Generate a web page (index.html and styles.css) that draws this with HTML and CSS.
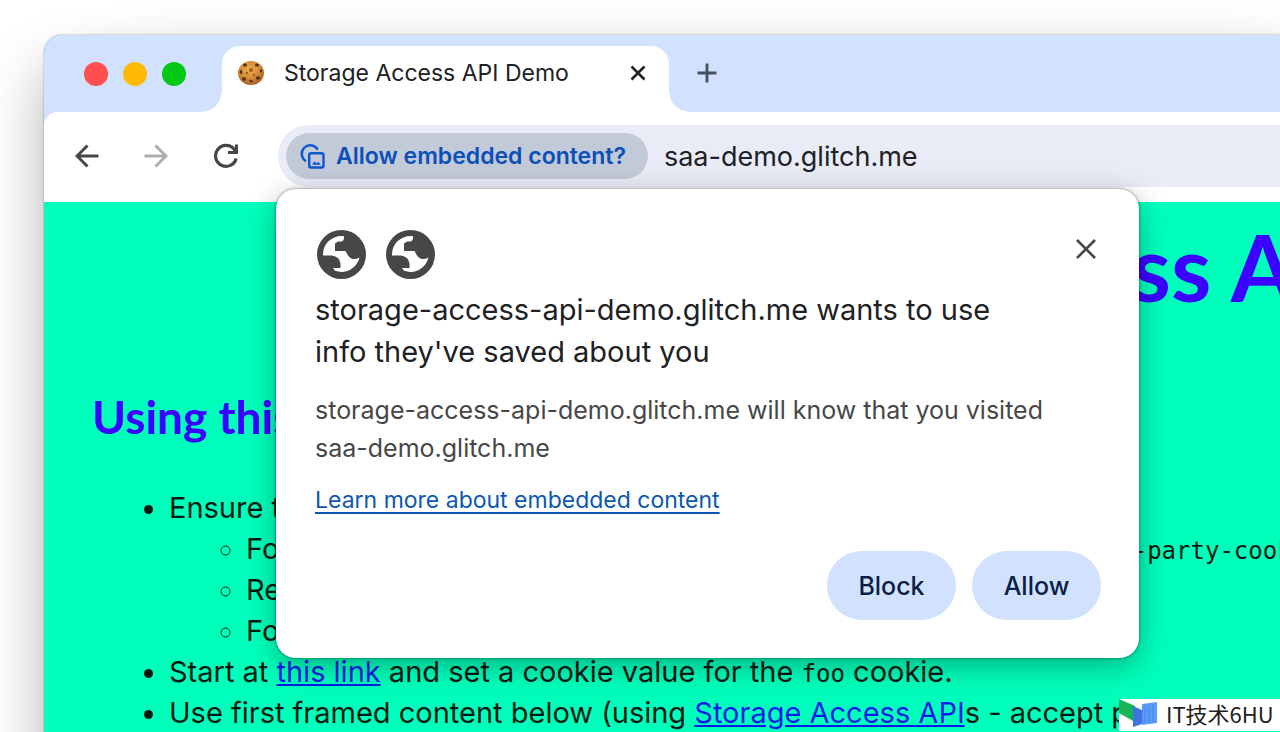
FILE: index.html
```html
<!DOCTYPE html>
<html lang="en">
<head>
  <meta charset="UTF-8" />
  <meta name="viewport" content="width=device-width, initial-scale=1.0"/>
  <title>Storage Access API Demo</title>
  <link rel="stylesheet" href="styles.css">
</head>
<body>
  <div class="window">
    <header class="tab-strip">
      <div class="lights">
        <span class="light red"></span>
        <span class="light yellow"></span>
        <span class="light green"></span>
      </div>
      <div class="tab">
        <svg class="favicon" viewBox="0 0 26 24">
          <defs>
            <radialGradient id="dough" cx="45%" cy="35%" r="65%">
              <stop offset="0" stop-color="#e9b04f"/>
              <stop offset="0.6" stop-color="#d08a35"/>
              <stop offset="1" stop-color="#a85f22"/>
            </radialGradient>
          </defs>
          <ellipse cx="13" cy="12" rx="13" ry="12" fill="url(#dough)"/>
          <g fill="#5c2c12">
            <ellipse cx="7" cy="4" rx="2" ry="1.5"/>
            <ellipse cx="19" cy="4" rx="2" ry="1.6"/>
            <ellipse cx="3" cy="11" rx="1.3" ry="2"/>
            <ellipse cx="6" cy="18" rx="2" ry="1.7"/>
            <ellipse cx="20" cy="17" rx="2.2" ry="1.8"/>
            <ellipse cx="13" cy="20" rx="1.6" ry="1.3"/>
            <ellipse cx="23" cy="10" rx="1.2" ry="1.8"/>
          </g>
          <g fill="#a5591e">
            <circle cx="13" cy="9" r="2"/>
            <circle cx="9" cy="12" r="1.2"/>
            <circle cx="16" cy="14" r="1.3"/>
          </g>
        </svg>
        <span class="tab-title">Storage Access API Demo</span>
        <button class="icon-button tab-close" aria-label="Close tab">
          <svg width="16" height="16" viewBox="0 0 16 16"><path d="M1.5 1.5l13 13M14.5 1.5l-13 13" stroke="#202124" stroke-width="2.6"/></svg>
        </button>
      </div>
      <button class="icon-button new-tab" aria-label="New tab">
        <svg width="20" height="20" viewBox="0 0 20 20"><path d="M10 0.5v19M0.5 10h19" stroke="#474f5e" stroke-width="2.8"/></svg>
      </button>
    </header>

    <div class="toolbar">
      <button class="icon-button" aria-label="Back">
        <svg width="24" height="24" viewBox="0 0 24 24"><path d="M23.5 12H2M12.5 1.5L2 12l10.5 10.5" fill="none" stroke="#474747" stroke-width="3"/></svg>
      </button>
      <button class="icon-button" aria-label="Forward">
        <svg width="24" height="24" viewBox="0 0 24 24"><path d="M0.5 12H22M11.5 1.5L22 12 11.5 22.5" fill="none" stroke="#adadad" stroke-width="3"/></svg>
      </button>
      <button class="icon-button" aria-label="Reload">
        <svg width="26" height="26" viewBox="0 0 26 26"><path d="M23.2 15.5A10.5 10.5 0 1 1 21 6l2 3" fill="none" stroke="#474747" stroke-width="3.2"/><path d="M23.5 1.5V9.5H15" fill="none" stroke="#474747" stroke-width="3"/></svg>
      </button>
      <div class="omnibox">
        <button class="chip">
          <svg width="26" height="26" viewBox="0 0 26 26" fill="none" stroke="#0b57d0" stroke-width="2.4">
            <path d="M7 18.3A8.600 8.600 0 1 1 18.800 6.600"/>
            <rect x="10.2" y="10.2" width="14.3" height="14.3" rx="2"/>
            <path d="M13 21.8l2.600-3.600 2 2.400 1.600-1.800 2.600 3z" fill="#0b57d0" stroke="none"/>
          </svg>
          Allow embedded content?
        </button>
        <span class="url">saa-demo.glitch.me</span>
      </div>
    </div>

    <main class="page">
      <h1>Storage Access API Demo</h1>
      <h2>Using this demo</h2>
      <ul>
        <li>Ensure third-party cookies are blocked:
          <ul>
            <li>For Chrome, turn on the following browser flag: <code>#block-all-third-party-cookies</code></li>
            <li>Restart the browser</li>
            <li>For other browsers, use the defaults</li>
          </ul>
        </li>
        <li>Start at <a href="#">this link</a> and set a cookie value for the <code>foo</code> cookie.</li>
        <li>Use first framed content below (using <a href="#">Storage Access API</a>s - accept prompt)</li>
      </ul>
    </main>
  </div>

  <div class="prompt" role="dialog" aria-labelledby="promptTitle">
    <div class="prompt-top">
      <div class="globes">
        <svg width="49" height="49" viewBox="0 0 49 49">
          <circle cx="24.5" cy="24.5" r="24.5" fill="#474747"/>
          <path d="M27 6.200C15 5 5.500 14 6 25.500h9q7.500 1 8.500 8V38H16l2 2.800A18.500 18.500 0 0 0 42.500 27.500Q39 29.500 36 29q-3-.500-5-3.500L28.500 21H18v-7.500l3-2h4Q27.500 10 27 6.200z" fill="#fff"/>
        </svg>
        <svg width="49" height="49" viewBox="0 0 49 49">
          <circle cx="24.5" cy="24.5" r="24.5" fill="#474747"/>
          <path d="M27 6.200C15 5 5.500 14 6 25.500h9q7.500 1 8.500 8V38H16l2 2.800A18.500 18.500 0 0 0 42.500 27.500Q39 29.500 36 29q-3-.500-5-3.500L28.500 21H18v-7.500l3-2h4Q27.500 10 27 6.200z" fill="#fff"/>
        </svg>
      </div>
      <button class="icon-button" aria-label="Close">
        <svg width="20" height="20" viewBox="0 0 20 20"><path d="M1 1l18 18M19 1L1 19" stroke="#474747" stroke-width="2.6"/></svg>
      </button>
    </div>
    <h3 id="promptTitle">storage-access-api-demo.glitch.me wants to use<br>info they've saved about you</h3>
    <p>storage-access-api-demo.glitch.me will know that you visited<br>saa-demo.glitch.me</p>
    <a class="learn" href="#">Learn more about embedded content</a>
    <div class="actions">
      <button>Block</button>
      <button>Allow</button>
    </div>
  </div>

  <div class="watermark">
    <svg width="42" height="32" viewBox="0 0 42 32">
      <path d="M0 0l16 7v5l-2 10L0 14z" fill="#18b556"/>
      <path d="M14 7l9 4v14l-9 3z" fill="#3f74dc"/>
      <path d="M23 5l15-2v21l-15 2z" fill="#5b9bf8"/>
      <path d="M26 7v17M30 6v17M34 5v17" stroke="#4a84ea"/>
    </svg>
    <span>IT技术6HU</span>
  </div>
</body>
</html>
```
FILE: styles.css
```css
* {
  box-sizing: border-box;
}
body {
  margin: 0;
  padding: 35px 0 0 44px;
  height: 100vh;
  overflow: hidden;
  position: relative;
  background: #fff;
  font-family: Inter, "Liberation Sans", sans-serif;
  color: #202124;
}
button {
  font-family: inherit;
  border: none;
  cursor: pointer;
}
svg {
  display: block;
  flex: none;
}
.window {
  min-height: 100vh;
  border-top-left-radius: 18px;
  overflow: hidden;
  background: #00ffbb;
  box-shadow: 0 0 2px rgba(0, 0, 0, 0.4), 60px 34px 70px rgba(0, 0, 0, 0.15), 0 34px 60px rgba(0, 0, 0, 0.3);
}

/* tab strip */
.tab-strip {
  display: flex;
  align-items: flex-end;
  height: 77px;
  background: #d2e2fe;
}
.lights {
  display: flex;
  gap: 15px;
  width: 178px;
  padding: 0 0 26px 40px;
}
.light {
  width: 24px;
  height: 24px;
  border-radius: 50%;
}
.red {
  background: #ff4e4f;
}
.yellow {
  background: #ffbb03;
}
.green {
  background: #03c916;
}
.tab {
  position: relative;
  display: flex;
  align-items: center;
  width: 447px;
  height: 66px;
  padding: 0 23px 12px 16px;
  background: #fff;
  border-radius: 18px 18px 0 0;
}
.tab::before,
.tab::after {
  content: "";
  position: absolute;
  bottom: 0;
  width: 20px;
  height: 20px;
}
.tab::before {
  right: 100%;
  background: radial-gradient(circle at 0 0, transparent 19px, #fff 20px);
}
.tab::after {
  left: 100%;
  background: radial-gradient(circle at 100% 0, transparent 19px, #fff 20px);
}
.favicon {
  width: 26px;
  height: 24px;
  margin-right: 20px;
}
.tab-title {
  flex: 1;
  font-size: 23px;
  white-space: nowrap;
}
.icon-button {
  display: flex;
  padding: 0;
  background: none;
}
.new-tab {
  margin: 0 0 29px 28px;
}

/* toolbar */
.toolbar {
  display: flex;
  align-items: center;
  gap: 45px;
  height: 90px;
  padding: 0 0 2px 31px;
  background: #fff;
  border-top-left-radius: 14px;
  box-shadow: -14px -14px 0 #d2e2fe;
}
.omnibox {
  flex: 1;
  display: flex;
  align-items: center;
  gap: 16px;
  height: 62px;
  margin-left: -6px;
  padding-left: 8px;
  background: #e9ecf6;
  border-radius: 31px 0 0 31px;
}
.chip {
  display: flex;
  align-items: center;
  gap: 11px;
  height: 46px;
  padding: 0 22px 0 13px;
  border-radius: 23px;
  background: #c2cad8;
  color: #0b4fb9;
  font-size: 23px;
  font-weight: 600;
  white-space: nowrap;
}
.url {
  font-size: 27px;
}

/* page */
.page {
  padding: 0 48px;
  color: #001a12;
  font-size: 29px;
  line-height: 41px;
}
.page h1,
.page h2 {
  color: #3b00ff;
  font-family: Lato, "Liberation Sans", sans-serif;
  white-space: nowrap;
}
.page h1 {
  margin: 0;
  padding: 10px 0 0 508px;
  font-size: 92px;
  line-height: 110px;
}
.page h2 {
  margin: 70px 0 45px;
  font-size: 46px;
  line-height: 50px;
}
.page ul {
  margin: 0;
  padding-left: 77px;
  white-space: nowrap;
}
.page a {
  color: #0a1ce8;
}
.page code {
  font-family: "DejaVu Sans Mono", monospace;
  font-size: 24px;
  line-height: 1;
}

/* permission prompt */
.prompt {
  position: absolute;
  top: 189px;
  left: 276px;
  width: 863px;
  padding: 41px 38px 38px 39px;
  background: #fff;
  border-radius: 20px;
  box-shadow: 0 0 3px rgba(0, 0, 0, 0.5), 0 8px 30px rgba(0, 0, 0, 0.3);
}
.prompt-top {
  display: flex;
  justify-content: space-between;
  align-items: flex-start;
  padding: 0 5px 0 2px;
}
.prompt-top .icon-button {
  margin-top: 9px;
}
.globes {
  display: flex;
  gap: 20px;
}
.prompt h3 {
  margin: 10px 0 18px;
  font-size: 29px;
  font-weight: 400;
  line-height: 42px;
  white-space: nowrap;
}
.prompt p {
  margin: 0 0 14px;
  color: #474747;
  font-size: 25px;
  line-height: 38px;
  white-space: nowrap;
}
.learn {
  color: #0b57b0;
  font-size: 23px;
  line-height: 38px;
  text-underline-offset: 4px;
}
.actions {
  display: flex;
  justify-content: flex-end;
  gap: 16px;
  margin-top: 32px;
}
.actions button {
  width: 129px;
  height: 69px;
  border-radius: 35px;
  background: #d2e2fe;
  color: #0a1f44;
  font-size: 25px;
  font-weight: 500;
}

.watermark {
  position: absolute;
  right: 0;
  bottom: 1px;
  display: flex;
  align-items: center;
  gap: 5px;
  width: 161px;
  height: 32px;
  background: #fff;
  color: #222;
  font-family: "Noto Sans CJK SC", sans-serif;
  font-size: 22px;
  line-height: 28px;
  white-space: nowrap;
}
.watermark span {
  padding-bottom: 4px;
}
```
